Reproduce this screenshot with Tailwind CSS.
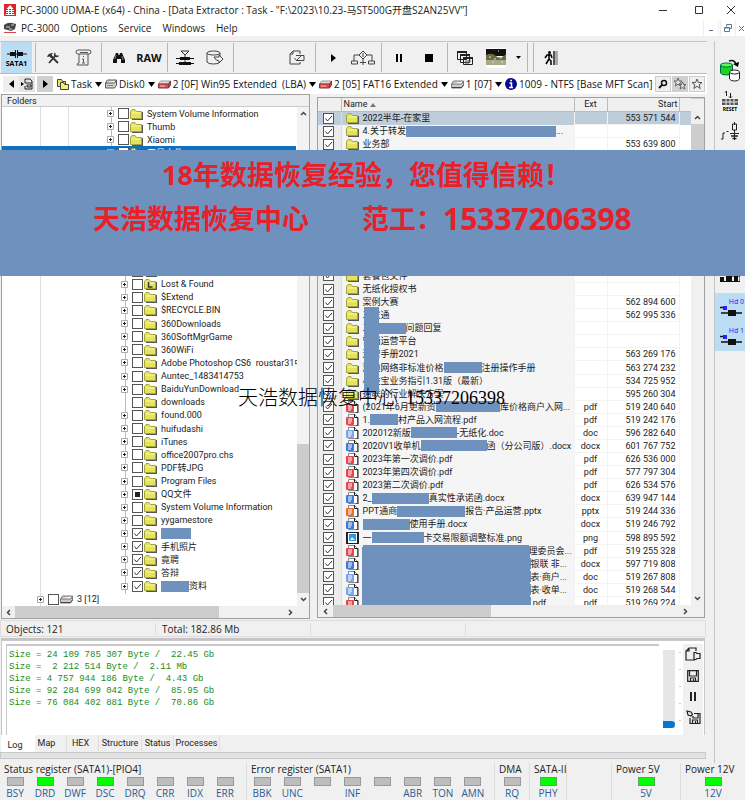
<!DOCTYPE html>
<html lang="zh-CN">
<head>
<meta charset="utf-8">
<title>PC-3000 UDMA-E</title>
<script src="https://cdn.jsdelivr.net/npm/@tailwindcss/browser@4"></script>
</head>
<body class="relative flex h-screen flex-col overflow-hidden bg-[#f0f0f0] font-['Open_Sans','Noto_Sans_CJK_SC',sans-serif] text-[10px] leading-3 text-[#222]">

<header class="flex h-5 shrink-0 items-center bg-white pl-1">
  <svg class="mr-1 h-3 w-3" viewBox="0 0 12 12"><rect width="12" height="12" fill="#e0202b"/><path d="M6 1 2.500 5h7z" fill="#fff"/><path d="M2 6.500h8M2 8.500h8M1.500 10.500h9M4.500 5v5M7.500 5v5" stroke="#fff" fill="none"/></svg>
  <h1 class="flex-1 whitespace-nowrap">PC-3000 UDMA-E (x64) - China - [Data Extractor : Task - "F:\2023\10.23-马ST500G开盘S2AN25VV"]</h1>
  <button aria-label="Minimize" class="grid h-5 w-9 place-items-center"><svg class="h-2 w-2" viewBox="0 0 8 8"><path d="M0 4.500h8" stroke="#333"/></svg></button>
  <button aria-label="Maximize" class="grid h-5 w-9 place-items-center"><svg class="h-2 w-2" viewBox="0 0 8 8"><path d="M.5.5h7v7h-7z" stroke="#333" fill="none"/></svg></button>
  <button aria-label="Close" class="grid h-5 w-7 place-items-center"><svg class="h-2 w-2" viewBox="0 0 8 8"><path d="m0 0 8 8M8 0 0 8" stroke="#333"/></svg></button>
</header>

<nav class="flex h-4 shrink-0 items-center bg-white pl-1">
  <svg class="mr-1 h-3 w-3" viewBox="0 0 12 12"><path d="M0 3q4-3 8-2l4 1-1 5-4 2-7-2z" fill="#444"/><path d="M2 5h4M7 3h3M5 7h3" stroke="#ccc"/><path d="M0 10.500h12" stroke="#d44"/></svg>
  <div class="flex flex-1 gap-[11px] pl-px">
    <button>PC-3000</button><button>Options</button><button>Service</button><button>Windows</button><button>Help</button>
  </div>
  <div class="flex gap-px text-[#5b7894]">
    <button aria-label="Minimize child" class="grid h-4 w-4 place-items-center border-x border-[#eee]"><svg class="h-2 w-2" viewBox="0 0 8 8"><path d="M2 6.500h4" stroke="currentColor"/></svg></button>
    <button aria-label="Restore child" class="grid h-4 w-4 place-items-center border-x border-[#eee]"><svg class="h-2 w-2" viewBox="0 0 8 8"><path d="M2.500 2.500v-2h5v4h-2M.5 3.500h5v4h-5zM.5 4h5" stroke="currentColor" fill="none"/></svg></button>
    <button aria-label="Close child" class="grid h-4 w-2 place-items-center"><svg class="h-2 w-2" viewBox="0 0 8 8"><path d="m2 2 5 5M7 2 2 7" stroke="currentColor"/></svg></button>
  </div>
</nav>

<div class="flex min-h-0 flex-1 pt-[5px]">
  <div class="flex min-w-0 flex-1 flex-col pb-1">

    <div class="flex h-8 shrink-0 border-t border-[#c4c4c4] pl-px">
      <button class="flex w-[31px] flex-col items-center justify-center bg-[#bcdcf4] text-[7px] leading-2 font-bold text-black">
        <svg class="h-3 w-5" viewBox="0 0 20 12"><path d="M0 6h20" stroke="#111"/><path d="M3 4h5v4H3zM11 4h5v4h-5z" fill="#111"/><path d="M8.500 2v8M10.500 2v8" stroke="#111"/></svg>SATA1</button>
      <i class="mx-0.5 my-px w-0.5 border-r border-[#b5b5b5]"></i>
      <button aria-label="Tools" class="grid w-[30px] place-items-center"><svg class="h-3 w-3" viewBox="0 0 12 12"><path d="m2 11 7-8M11 11 4 4" stroke="#333" stroke-width="1.800" fill="none"/><path d="M0 5q1-4 6-4L4.500 3 6 4.500 4 6 2.500 4.500z" fill="#333"/><path d="M8 .8 7.500 3 9 4.500l2.500-.5" stroke="#333" stroke-width="1.300" fill="none"/></svg></button>
      <button aria-label="Script" class="grid w-[30px] place-items-center"><svg class="h-[17px] w-[17px]" viewBox="0 0 17 17"><path d="M3 1h11q2 0 2 2t-2 2H3q-2 0-2-2t2-2M4 5v9q-2 0-2 2h11V5M5 3.500h8M8.500 7v1M7 10h1.500v3.500M7 14h3" stroke="#555" fill="none"/></svg></button>
      <i class="mx-0.5 my-px w-0.5 border-r border-[#b5b5b5]"></i>
      <button aria-label="Find" class="grid w-[30px] place-items-center"><svg class="h-3 w-3" viewBox="0 0 12 12"><path d="M3 1h2l.5 2h1L7 1h2l3 7v3H8V7H4v4H0V8z" fill="#111"/><path d="m3 3-1 4M9 4l1 4" stroke="#aaa" stroke-width=".7"/></svg></button>
      <button class="w-[30px] text-[11px] font-bold text-[#111]">RAW</button>
      <i class="mx-0.5 my-px w-0.5 border-r border-[#b5b5b5]"></i>
      <button aria-label="Connect" class="grid w-[30px] place-items-center"><svg class="h-4 w-[18px]" viewBox="0 0 18 16"><path d="M5 1h8L9 5zM9 5v10" stroke="#333" fill="none"/><path d="M4 7h10v3H4zM3 12h12v3H3z" fill="#111"/><path d="M0 8.500h18M0 13.500h18" stroke="#111"/></svg></button>
      <button aria-label="Disk image" class="grid w-[30px] place-items-center"><svg class="h-[15px] w-[18px]" viewBox="0 0 18 15"><ellipse cx="7.500" cy="3" rx="6.500" ry="2" stroke="#444" fill="none"/><path d="M1 3v9q1 2 6.500 2 5.500 0 6.500-2M14 3v3M8 7h5V5l4 4-4 4v-2q-3 0-5-4z" stroke="#444" fill="none"/></svg></button>
      <i class="mx-0.5 my-px w-0.5 border-r border-[#b5b5b5]"></i>
      <button aria-label="Apply task" class="ml-[46px] grid w-[30px] place-items-center"><svg class="h-[15px] w-4" viewBox="0 0 16 15"><path d="M11 4V1H4L1 4v10h10v-2M4 1v3H1" stroke="#444" fill="none"/><path d="M7 5.500h8v5H7M5.500 8l2 2.500L13 5" stroke="#444" fill="none"/></svg></button>
      <i class="mx-0.5 my-px w-0.5 border-r border-[#b5b5b5]"></i>
      <button aria-label="Start" class="grid w-[30px] place-items-center"><svg class="h-2 w-[5px]" viewBox="0 0 5 8"><path d="m0 0 5 4-5 4z"/></svg></button>
      <button aria-label="Options tree" class="grid w-[30px] place-items-center"><svg class="h-4 w-6" viewBox="0 0 24 16"><path d="m12 1 4 4-4 4-4-4zM12 3v4M8 5H3v6M16 5h5v6M.5 11h6v3h-6zM17.500 11h6v3h-6zM12 9v6M9 12.500h6" stroke="#444" fill="none"/></svg></button>
      <i class="mx-0.5 my-px w-0.5 border-r border-[#b5b5b5]"></i>
      <button aria-label="Pause" class="grid w-[30px] place-items-center"><svg class="h-2 w-1.5" viewBox="0 0 6 8"><path d="M0 0h2v8H0zM4 0h2v8H4z"/></svg></button>
      <button aria-label="Stop" class="grid w-[30px] place-items-center"><svg class="h-2 w-2" viewBox="0 0 8 8"><path d="M0 0h8v8H0z"/></svg></button>
      <i class="mx-0.5 my-px w-0.5 border-r border-[#b5b5b5]"></i>
      <button aria-label="Windows list" class="grid w-[30px] place-items-center"><svg class="h-4 w-4" viewBox="0 0 16 16"><path d="M.5 1.500h9v8h-9z M3.500 4.500h9v8h-9zM6.500 7.500h9v7h-9z" fill="#f0f0f0" stroke="#222"/><path d="M0 2h10M3 5h10M6 8h10" stroke="#222" stroke-width="2"/><path d="M8 11h6M8 13h4" stroke="#555"/></svg></button>
      <button aria-label="Map view" class="grid w-8 place-items-center"><svg class="h-5 w-5" viewBox="0 0 20 20"><path d="M0 0h20v20H0z" fill="#fff"/><path d="M0 1h20v7H0z" fill="#111"/><path d="M0 7q6-3 10 1t10-2v9H0z" fill="#6b6b3c"/><path d="M0 12h20v5H0z" fill="#a9a98c"/><path d="M3 9h2M8 11h2M14 10h2M12 3h1M6 14h2M15 14h2" stroke="#ddd"/></svg></button>
      <button aria-label="Map options" class="grid w-3 place-items-center"><svg class="h-[3px] w-[5px]" viewBox="0 0 5 3"><path d="M0 0h5L2.500 3z"/></svg></button>
      <i class="mx-0.5 my-px w-0.5 border-r border-[#b5b5b5]"></i>
      <i class="mx-0.5 my-px w-0.5 border-r border-[#b5b5b5]"></i>
      <button aria-label="Exit" class="grid w-[30px] place-items-center"><svg class="h-[14px] w-[14px]" viewBox="0 0 14 14"><circle cx="5.500" cy="1.500" r="1.500"/><path d="M5 3v5l2 2v4M5 8l-3 5M1 7l2-3h4l1 3" stroke="#000" stroke-width="1.500" fill="none"/><path d="M9 0h2v14H9z" fill="#555"/><path d="M11 0h3v14h-3z" fill="#aaa"/></svg></button>
    </div>

    <div class="flex h-[21px] shrink-0 items-center border-t border-[#bbb] bg-white pl-[3px] whitespace-nowrap text-[#111]">
      <button aria-label="Back" class="grid h-4 w-4 place-items-center bg-[#eee]"><svg class="h-2 w-[5px]" viewBox="0 0 5 8"><path d="M5 0 0 4l5 4z"/></svg></button>
      <button aria-label="Go to" class="grid h-4 w-4 place-items-center bg-[#e4e4e4]"><svg class="h-3 w-3" viewBox="0 0 12 12"><path d="M4 5V1h5l2 2v8H4V8M4 5h7M6 7h4v2H6z" stroke="#222" fill="none"/><path d="m0 4 3 2-3 2z"/></svg></button>
      <button aria-label="Forward" class="mr-1 ml-0.5 grid h-4 w-4 place-items-center bg-[#d0d0d0]"><svg class="h-2 w-[5px]" viewBox="0 0 5 8"><path d="m0 0 5 4-5 4z"/></svg></button>
      <div id="crumbs" class="flex flex-1 items-center"></div>
      <div class="flex gap-px pr-0.5">
        <button aria-label="Search" class="grid h-4 w-4 place-items-center border border-[#ccc] bg-[#eee]"><svg class="h-2.5 w-2.5" viewBox="0 0 10 10"><circle cx="6" cy="4" r="2.500" stroke="#111" stroke-width="1.500" fill="none"/><path d="M4 6 1 9" stroke="#111" stroke-width="2"/></svg></button>
        <button aria-label="Bookmarks" class="grid h-4 w-4 place-items-center bg-[#d0d0d0]"><svg class="h-3.5 w-3.5" viewBox="0 0 14 14"><path d="m5 1 1.200 3H9L6.800 6l.8 3L5 7.200 2.400 9l.8-3L1 4h2.800zM9.500 5l1 2.500H13L11 9l.8 3-2.300-1.500L7 12l.8-3L6 7.500h2.500z" stroke="#666" fill="#ddd"/></svg></button>
        <button aria-label="Add bookmark" class="grid h-4 w-4 place-items-center border border-[#ccc] bg-[#eee]"><svg class="h-3 w-3" viewBox="0 0 12 12"><path d="m6 1 1.400 3.500H11L8.200 6.800 9.200 10.500 6 8.300l-3.200 2.200 1-3.700L1 4.500h3.600z" stroke="#555" fill="none"/></svg></button>
      </div>
    </div>

    <main class="flex min-h-0 flex-1 gap-[7px] pr-0.5 pl-px font-['Roboto','Noto_Sans_CJK_SC',sans-serif] text-[9px]">
      <section class="flex w-[309px] shrink-0 flex-col border border-[#a0a0a0] bg-white" aria-label="Folders">
        <h2 class="h-3 shrink-0 border-b border-[#ccc] bg-[#f0f0f0] pl-[5px] leading-3">Folders</h2>
        <div class="flex min-h-0 flex-1">
          <div class="relative min-w-0 flex-1 overflow-hidden">
            <i class="absolute inset-y-0 left-[38px] w-px bg-[#ddd]"></i>
            <i class="absolute top-0 left-[66px] h-40 w-px bg-[#ddd]"></i>
            <i class="absolute top-0 left-[109px] h-10 w-px bg-[#bbb]"></i>
            <i class="absolute top-40 bottom-3 left-[123px] w-px bg-[#bbb]"></i>
            <ul id="tree" class="relative flex h-full flex-col"></ul>
          </div>
          <div class="flex w-3 flex-col items-center bg-[#f2f2f2]">
            <svg class="my-1 h-[5px] w-[7px]" viewBox="0 0 7 5"><path d="m1 4 2.500-2.500L6 4" stroke="#444" stroke-width="1.500" fill="none"/></svg>
            <span class="flex-[324]"></span><i class="w-full flex-[149] bg-[#cdcdcd]"></i>
            <svg class="my-1 h-[5px] w-[7px]" viewBox="0 0 7 5"><path d="m1 1 2.500 2.500L6 1" stroke="#444" stroke-width="1.500" fill="none"/></svg>
          </div>
        </div>
        <div class="flex h-3 shrink-0 items-center bg-[#f0f0f0]">
          <svg class="mx-1 h-[7px] w-[5px]" viewBox="0 0 5 7"><path d="M4 1 1.500 3.500 4 6" stroke="#444" stroke-width="1.500" fill="none"/></svg>
          <i class="h-full flex-[201] bg-[#cdcdcd]"></i><span class="flex-[68]"></span>
          <svg class="mr-4 h-[7px] w-[5px]" viewBox="0 0 5 7"><path d="m1 1 2.500 2.500L1 6" stroke="#444" stroke-width="1.500" fill="none"/></svg>
        </div>
      </section>

      <section class="mt-[3px] mb-px flex min-w-0 flex-1 flex-col border border-[#a0a0a0] bg-white" aria-label="Files">
        <div class="flex min-h-0 flex-1">
          <div class="relative min-w-0 flex-1 overflow-hidden">
            <table class="h-[512px] w-full table-fixed border-collapse">
              <thead>
                <tr class="h-[13px] bg-[#f0f0f0]">
                  <th class="w-[23px] border-r border-b border-[#bbb] p-0"></th>
                  <th class="border-r border-b border-[#bbb] p-0 pl-0.5 text-left font-normal whitespace-nowrap">Name <svg class="inline h-1 w-1.5" viewBox="0 0 6 4"><path d="M3 0 6 4H0z" fill="#777"/></svg></th>
                  <th class="w-[33px] border-r border-b border-[#bbb] p-0 font-normal">Ext</th>
                  <th class="w-[72px] border-r border-b border-[#bbb] p-0 pr-px text-right font-normal">Start</th>
                  <th class="w-3 border-b border-[#bbb] p-0"></th>
                </tr>
              </thead>
              <tbody id="files"></tbody>
            </table>
            <i class="absolute top-[209px] left-[46px] h-[86px] w-[15px] bg-[#6e91be]"></i>
            <i class="absolute top-[449px] left-11 h-[60px] w-[168px] bg-[#6e91be]"></i>
          </div>
          <div class="flex w-[13px] flex-col items-center border-t border-[#ccc] bg-[#f0f0f0] pt-3">
            <svg class="my-1 h-[5px] w-[7px] shrink-0" viewBox="0 0 7 5"><path d="m1 4 2.500-2.500L6 4" stroke="#444" stroke-width="1.500" fill="none"/></svg>
            <i class="h-20 w-full bg-[#cdcdcd]"></i><span class="flex-1"></span>
            <svg class="my-1 h-[5px] w-[7px]" viewBox="0 0 7 5"><path d="m1 1 2.500 2.500L6 1" stroke="#444" stroke-width="1.500" fill="none"/></svg>
          </div>
        </div>
        <div class="flex h-3 shrink-0 items-center bg-[#f0f0f0]">
          <svg class="mx-[5px] h-[7px] w-[5px]" viewBox="0 0 5 7"><path d="M4 1 1.500 3.500 4 6" stroke="#444" stroke-width="1.500" fill="none"/></svg>
          <i class="h-full flex-[158] bg-[#cdcdcd]"></i><span class="flex-[192]"></span>
          <svg class="mr-4 h-[7px] w-[5px]" viewBox="0 0 5 7"><path d="m1 1 2.500 2.500L1 6" stroke="#444" stroke-width="1.500" fill="none"/></svg>
        </div>
      </section>
    </main>

    <div class="mt-px mr-px flex h-[17px] shrink-0 items-center border border-[#ddd] text-[10px]">
      <span class="w-[155px] border-r border-[#ddd] pl-[5px]">Objects: 121</span><span class="w-[155px] border-r border-[#ddd] pl-1.5">Total: 182.86 Mb</span><span class="h-3 w-[155px] border-r border-[#ddd]"></span>
    </div>

    <section class="mt-[3px] mr-0.5 ml-px flex h-[95px] shrink-0 border-x border-t border-[#c8c8c8] bg-white pt-[3px] shadow-[0_-2px_0_#c4c4c4]" aria-label="Log">
      <pre class="ml-1 min-w-0 flex-1 overflow-hidden border-t-2 border-l border-[#c8c8c8] pt-[3px] pl-0.5 font-['Liberation_Mono',monospace] text-[9px] leading-3 text-[#1a8c1a]">Size = 24 109 785 307 Byte /  22.45 Gb
Size =  2 212 514 Byte /  2.11 Mb
Size = 4 757 944 186 Byte /  4.43 Gb
Size = 92 284 699 042 Byte /  85.95 Gb
Size = 76 084 402 881 Byte /  70.86 Gb</pre>
      <input type="range" aria-label="Log detail" min="0" max="4" value="0" class="mt-1.5 ml-1 h-[78px] w-3 appearance-none bg-[#e6e6e6] [direction:rtl] [writing-mode:vertical-lr] [&::-webkit-slider-thumb]:h-[7px] [&::-webkit-slider-thumb]:w-3 [&::-webkit-slider-thumb]:appearance-none [&::-webkit-slider-thumb]:rounded-r-sm [&::-webkit-slider-thumb]:bg-[#0078d7]">
      <div class="mt-2 flex w-2 flex-col gap-4 pl-1"><i class="h-px w-0.5 bg-[#ccc]"></i><i class="h-px w-0.5 bg-[#ccc]"></i><i class="h-px w-0.5 bg-[#ccc]"></i><i class="h-px w-0.5 bg-[#ccc]"></i><i class="h-px w-0.5 bg-[#ccc]"></i></div>
      <div class="mr-px flex w-5 flex-col items-center bg-[#f0f0f0]">
        <button aria-label="New log" class="grid h-[21px] place-items-center"><svg class="h-[15px] w-4" viewBox="0 0 16 15"><path d="M11 4V1H4L1 4v9h9M4 1v3H1M9 5.500h2l1 1h3v5h-3l-1 1H9z" stroke="#222" stroke-width="1.200" fill="none"/></svg></button>
        <button aria-label="Save log" class="grid h-[21px] place-items-center"><svg class="h-3 w-3" viewBox="0 0 12 12"><path d="M.7.7h10.600v10.600H.7zM2.500 1v5h7V1M3.500 11V8h5v3M6.500 9v2" stroke="#222" stroke-width="1.200" fill="none"/></svg></button>
        <button aria-label="Pause log" class="grid h-[21px] place-items-center"><svg class="h-[9px] w-1.5" viewBox="0 0 6 9"><path d="M0 0h2v9H0zM4 0h2v9H4z" fill="#222"/></svg></button>
        <button aria-label="Auto-save log" class="grid h-[21px] place-items-center"><svg class="h-[15px] w-[15px]" viewBox="0 0 15 15"><path d="M8 3.500h6v10H4V8M7 6v2h5V4M6.500 13v-3h5v3M9.500 11v2M1 1l1 4 3 1 1.500-1.500L5 2z" stroke="#222" stroke-width="1.200" fill="none"/></svg></button>
      </div>
    </section>

    <div role="tablist" class="ml-px flex h-[17px] shrink-0 items-start font-['Roboto',sans-serif] text-[9px]">
      <button role="tab" aria-selected="true" class="h-[17px] w-[34px] bg-white pr-1.5 pt-0.5">Log</button>
      <button role="tab" class="h-4 w-8 border-r border-[#ddd] pr-2">Map</button>
      <button role="tab" class="h-4 w-8 border-r border-[#ddd] pr-1">HEX</button>
      <button role="tab" class="h-4 w-[43px] border-r border-[#ddd]">Structure</button>
      <button role="tab" class="h-4 w-8 border-r border-[#ddd]">Status</button>
      <button role="tab" class="h-4 w-[46px] border-r border-[#ddd]">Processes</button>
    </div>
    <div class="mr-px h-[7px] shrink-0 border border-[#c8c8c8] bg-[#e2e2e2]"></div>
  </div>

  <aside class="relative ml-[7px] flex w-[31px] shrink-0 flex-col border-l border-[#c4c4c4] text-[#22e]" aria-label="Utility bar">
    <button aria-label="Power" class="mt-[15px] grid h-[30px] place-items-center"><svg class="h-6 w-5" viewBox="0 0 20 24"><path d="M.5 6v8q1 2 6 2t6-2V6" fill="#1ad61a" stroke="#064"/><ellipse cx="6.500" cy="6" rx="6" ry="2" fill="#5f5" stroke="#064"/><path d="M9.500 13v7q1 2 5 2t5-2v-7" fill="#fff" stroke="#222"/><ellipse cx="14.500" cy="13" rx="5" ry="2" fill="#fff" stroke="#222"/><path d="M9 2q5-2 7 3" stroke="#111" stroke-width="1.500" fill="none"/><path d="m13 5 6-2-1 5z"/></svg></button>
    <button aria-label="Reset" class="grid h-[30px] place-items-center"><svg class="h-5 w-4" viewBox="0 0 16 20"><path d="M3 1.500 4.500 0v5M8.500 2v5M7 5.500 8.500 7 10 5.500" stroke="#222" fill="none"/><path d="M0 8h16v6H0z" fill="#555"/><path d="M0 11h16M4 8v6M8 8v6M12 8v6" stroke="#eee"/><text x="8" y="20" text-anchor="middle" font-size="5" font-weight="bold">RESET</text></svg></button>
    <button aria-label="Ground" class="grid h-[30px] place-items-center"><svg class="h-5 w-5" viewBox="0 0 20 20"><path d="M1 18h2v-6h2M6.500 10.500h2M14.500 1v3M12.500 3h4v6h-4zM14.500 9v3M10 12.500h9M14.500 12v7" stroke="#222" fill="none"/><path d="M11 15h7M12.500 17.500h4" stroke="#222" stroke-width="1.500"/></svg></button>
    <button aria-label="Chip" class="mt-[120px] grid h-5 place-items-center"><svg class="h-4 w-5" viewBox="0 0 20 16"><path d="M0 9h4v4H0zM6 3h6v10H6zM14 3h4v10h-4z" fill="#111"/><path d="M0 13.500h20M12 8h8v6" stroke="#111" fill="none"/></svg></button>
    <button class="mt-[7px] flex h-[29px] flex-col items-end bg-[#bcdcf4] pt-[5px] pr-px text-[7px] leading-2">Hd 0<svg class="mr-px h-2.5 w-6" viewBox="0 0 24 10"><path d="M1 1.500h6M2 7h21" stroke="#111" stroke-width="1.500"/><path d="M4 0h4v4H4z" fill="#22f"/><path d="M9 4h8v6H9z" fill="#111"/></svg></button>
    <button class="flex h-[29px] flex-col items-end bg-[#bcdcf4] pt-[5px] pr-px text-[7px] leading-2">Hd 1<svg class="mr-px h-2.5 w-6" viewBox="0 0 24 10"><path d="M1 1.500h6M2 7h21" stroke="#111" stroke-width="1.500"/><path d="M4 0h4v4H4z" fill="#22f"/><path d="M9 4h8v6H9z" fill="#111"/></svg></button>
  </aside>
</div>

<footer id="registers" class="grid h-[37px] shrink-0 grid-cols-[247fr_248fr_35fr_37fr_45fr_69fr_64fr] whitespace-nowrap"></footer>

<div class="absolute inset-x-0 top-[150px] h-[126px] bg-[#6e91be] pt-[3px] font-bold text-[#e8202a]">
  <p class="pl-[162px] text-[27px] leading-[44px] whitespace-nowrap">18年数据恢复经验，您值得信赖！</p>
  <p class="flex pl-[93px] text-[27px] leading-[44px] whitespace-nowrap"><span class="mr-[53px]">天浩数据恢复中心</span>范工：<span class="text-[30px]">15337206398</span></p>
</div>
<p class="absolute top-[386px] left-[238px] flex gap-2 font-['Liberation_Serif','Noto_Sans_CJK_SC',serif] text-[18px] leading-6 font-light whitespace-nowrap text-black"><span class="text-[20px]">天浩数据恢复中心</span>15337206398</p>

<script>
const folder = '<svg class="h-3 w-[13px] shrink-0" viewBox="0 0 13 12"><path d="M2 4h11v8H2z" fill="#555"/><path d="M.5 3.500 2 1.500h3l1.500 2h5v7H.5z" fill="#e4e45c" stroke="#a5a53a"/><path d="M1.500 5h9" stroke="#f8f8a8"/></svg>';
const lost = folder.replace('</svg>', '<path d="M4.500 4v5h4" stroke="#333" stroke-width="1.500" fill="none"/></svg>');
const drive = '<svg class="h-2.5 w-[13px] shrink-0" viewBox="0 0 13 10"><path d="m.5 5 2-3h10l-2 3zM.5 5v4h10l2-3V2" fill="#ccc" stroke="#777"/><path d="M1 8.500h9.500l2-2.500" stroke="#444" fill="none"/></svg>';
const redDrive = '<svg class="h-2.5 w-[13px] shrink-0" viewBox="0 0 13 10"><path d="m.5 5 2-3h10l-2 3z" fill="#ddd" stroke="#999"/><path d="M.5 5h10v4H.5zM10.500 5l2-3v4l-2 3z" fill="#e05050" stroke="#833"/><path d="M2 7h5" stroke="#fbb"/></svg>';
const disk = '<svg class="h-2.5 w-3 shrink-0" viewBox="0 0 12 10"><path d="m.5 4 2-3h9l-2 3zM.5 4v5h9l2-3V1" fill="#cfd8cf" stroke="#555"/><path d="M2 6.500h6" stroke="#4a4"/></svg>';
const folders = '<svg class="h-3 w-3 shrink-0" viewBox="0 0 12 12"><path d="M.5 1.500h4l1 2h3v5h-8z" fill="#e4e45c" stroke="#444"/><path d="M3.500 4.500h3l1 2h4v5h-8z" fill="#f4f46c" stroke="#444"/></svg>';
const info = '<svg class="h-3 w-3 shrink-0" viewBox="0 0 12 12"><circle cx="6" cy="6" r="6" fill="#0a0a8c"/><path d="M4.500 5H6.500v4M4 9.500h4M5.200 2.500h1.800" stroke="#fff" stroke-width="1.500" fill="none"/></svg>';
const caret = '<svg class="mx-[3px] h-[5px] w-[7px] shrink-0" viewBox="0 0 7 5"><path d="M0 0h7L3.500 5z"/></svg>';
const doc = c => `<svg class="h-3 w-[13px] shrink-0" viewBox="0 0 13 12"><path d="M2.500.5h6l3 3v8h-9z" fill="#fff" stroke="#888"/><path d="M8.500 0v3.500H12v8.500h-2" stroke="#222" fill="none"/><rect y="3" width="8" height="8" rx="1" fill="${c}"/><path d="M2 5h4M2 7h4M2 9h3" stroke="#fff"/></svg>`;
const icons = { d: folder, p: doc('#e8454a'), w: doc('#3f78d8'), o: doc('#7aa5ee'), t: doc('#ee6a2c'),
  g: '<svg class="h-3 w-[13px] shrink-0" viewBox="0 0 13 12"><path d="M0 0h13v12H0z" fill="#222"/><path d="M2 1h9v10H2z" fill="#fff"/><path d="M3 2h7v7H3z" fill="#2b9be0"/><path d="m4 8 2-3 3 3z" fill="#cfe"/></svg>' };

// Box states: 0 empty, 1 ticked, 2 partly selected
const box = (state, id, name) => `<span class="grid shrink-0"><input type="checkbox" id="${id}" aria-label="${name}" ${state ? 'checked' : ''} class="col-start-1 row-start-1 h-[11px] w-[11px] appearance-none border border-[#555] bg-white">${
  state === 1 ? '<svg class="pointer-events-none col-start-1 row-start-1 h-[11px] w-[11px]" viewBox="0 0 11 11"><path d="M2.500 5.500 4.500 8 9 3" stroke="#333" fill="none"/></svg>'
  : state === 2 ? '<i class="pointer-events-none col-start-1 row-start-1 m-[3px] bg-[#222]"></i>' : ''}</span>`;
const plus = '<svg class="h-[7px] w-[7px] shrink-0" viewBox="0 0 7 7"><path d="M.5.5h6v6h-6z" fill="#fff" stroke="#aaa"/><path d="M2 3.500h3M3.500 2v3" stroke="#222"/></svg>';
const cover = w => `<i class="inline-block h-[11px] shrink-0 bg-[#6e91be]" style="width:${w}px"></i>`;
const mark = s => s.replace(/\{(\d+)\}/g, (m, w) => cover(w));
const plain = s => s.replace(/\{\d+\}/g, '…');

document.getElementById('crumbs').innerHTML = [[folders, 'Task'], [disk, 'Disk0'], [redDrive, '2 [0F] Win95 Extended&nbsp; (LBA)'], [redDrive, '2 [05] FAT16 Extended'], [drive, '1 [07]'], [info, '1009 - NTFS [Base MFT Scan]']]
  .map(([i, t], k) => `<button class="flex items-center gap-0.5">${i}${t}</button>${k < 5 ? caret : ''}`).join('');

const rows = [['a','System Volume Information',0],['a','Thumb',0],['a','Xiaomi',0],['s','工具文件',0],null,['b','',0],
  ['b','Lost & Found',0],['b','$Extend',0],['b','$RECYCLE.BIN',0],['b','360Downloads',0],['b','360SoftMgrGame',0],['b','360WiFi',0],
  ['b','Adobe Photoshop CS6&nbsp; roustar31中文',0],['b','Auntec_1483414753',0],['b','BaiduYunDownload',0],['n','downloads',0],['b','found.000',0],
  ['b','huifudashi',0],['b','iTunes',0],['b','office2007pro.chs',0],['b','PDF转JPG',0],['b','Program Files',0],['b','QQ文件',2],
  ['b','System Volume Information',0],['b','yygamestore',0],['b','{30}',1],['b','手机照片',1],['b','竟聘',1],['b','答辩',1],['b','{28}资料',1],['c','3 [12]',0]];
const indent = { a: 'pl-[105px]', s: 'pl-[105px] bg-[#0f6fc0] text-white mr-px', b: 'pl-[119px]', n: 'pl-[119px]', c: 'pl-[35px]' };
document.getElementById('tree').innerHTML = rows.map((r, k) => r === null ? '<li class="min-h-0 flex-[8]"></li>' :
  `<li class="flex min-h-0 flex-1 items-center whitespace-nowrap ${indent[r[0]]}">${r[0] === 'n' ? '<i class="w-[7px] shrink-0"></i>' : plus}<i class="w-1 shrink-0"></i>${box(r[2], 't' + k, plain(r[1]) || 'folder')}<i class="w-px shrink-0"></i>${r[0] === 'c' ? drive : r[1] === 'Lost & Found' ? lost : folder}<label for="t${k}" class="flex items-center pl-1">${mark(r[1]).replace(' & ', ' &amp; ')}</label></li>`).join('');

const files = [['d','2022半年-在家里','','553 571 544'],['d','4.关于转发{150}...','',''],['d','业务部','','553 639 800'],null,
  ['d','套餐包文件','',''],['d','无纸化授权书','',''],['d','案例大赛','','562 894 600'],['d','三农通','','562 995 336'],['d','三{34}问题回复','',''],
  ['d','营销运营平台','',''],['d','运营手册2021','','563 269 176'],['d','翼迪网络非标准价格{38}注册操作手册','','563 274 232'],['d','小维宝业务指引1.31版（最新）','','534 725 952'],
  ['d','通联的行业解决方案','','595 260 304'],['p','(2021年6月更新资{64}库价格商户入网...','pdf','519 240 640'],['p','1.{28}村产品入网流程.pdf','pdf','519 242 176'],
  ['o','202012新版{46}-无纸化.doc','doc','596 282 640'],['w','2020V1收单机{66}函（分公司版）.docx','docx','601 767 752'],
  ['p','2023年第一次调价.pdf','pdf','626 536 000'],['p','2023年第四次调价.pdf','pdf','577 797 304'],['p','2023第二次调价.pdf','pdf','626 534 576'],
  ['w','2_{57}真实性承诺函.docx','docx','639 947 144'],['t','PPT通商{68}报告·产品运营.pptx','pptx','519 244 336'],['w','{47}使用手册.docx','docx','519 246 792'],
  ['g','一{52}卡交易限额调整标准.png','png','598 895 592'],['p','{166}理委员会...','pdf','519 255 328'],['w','{168} 银联 非...','docx','597 719 808'],
  ['o','{168}表·商户...','doc','519 267 808'],['o','{168}表·收单...','doc','519 268 544'],['p','{168}.pdf','pdf','519 269 224']];
document.getElementById('files').innerHTML = files.map((f, k) => f === null ? '<tr><td colspan="5" class="h-[118px] p-0"></td></tr>' :
  `<tr class="${k ? 'bg-white' : 'bg-[#bfcddb]'}"><td class="h-[13px] border-r border-[#ddd] p-0 ${k ? 'bg-[#ececec]' : ''}"><div class="flex h-[13px] items-center pl-[5px]">${box(1, 'f' + k, plain(f[1]))}</div></td><td class="overflow-hidden p-0 ${k ? 'bg-[#f5f5f5]' : ''}"><label for="f${k}" class="flex h-[13px] items-center overflow-hidden pl-1 whitespace-nowrap">${icons[f[0]]}<i class="w-1 shrink-0"></i>${mark(f[1])}</label></td><td class="border border-[#f3f3f3] p-0 text-center">${f[2]}</td><td class="border border-[#f3f3f3] p-0 pr-[3px] text-right whitespace-nowrap">${f[3]}</td><td class="p-0"></td></tr>`).join('');

const groups = [['Status register (SATA1)-[PIO4]', ['BSY','+DRD','DWF','+DSC','DRQ','CRR','IDX','ERR']], ['Error register (SATA1)', ['BBK','UNC','','INF','','ABR','TON','AMN']],
  ['DMA', ['RQ']], ['SATA-II', ['+PHY']], ['', []], ['Power 5V', ['+5V']], ['Power 12V', ['+12V']]];
document.getElementById('registers').innerHTML = groups.map(([t, l]) => `<section class="min-w-0 border-r border-[#ddd] last:border-r-0"><h3 class="h-[14px] pl-1 leading-3">${t}</h3><div class="flex ${l.length > 1 ? 'pr-1.5' : ''}">${
  l.map(n => `<div class="flex min-w-0 flex-1 flex-col items-center text-[#2b5c94]"><i class="h-[9px] w-[17px] shrink-0 border ${n[0] === '+' ? 'border-[#5a5] bg-[#00ff00]' : 'border-[#999] bg-[#bdbdbd]'}"></i><span class="pt-px leading-3">${n.replace('+', '')}</span></div>`).join('')}</div></section>`).join('');
</script>
</body>
</html>
